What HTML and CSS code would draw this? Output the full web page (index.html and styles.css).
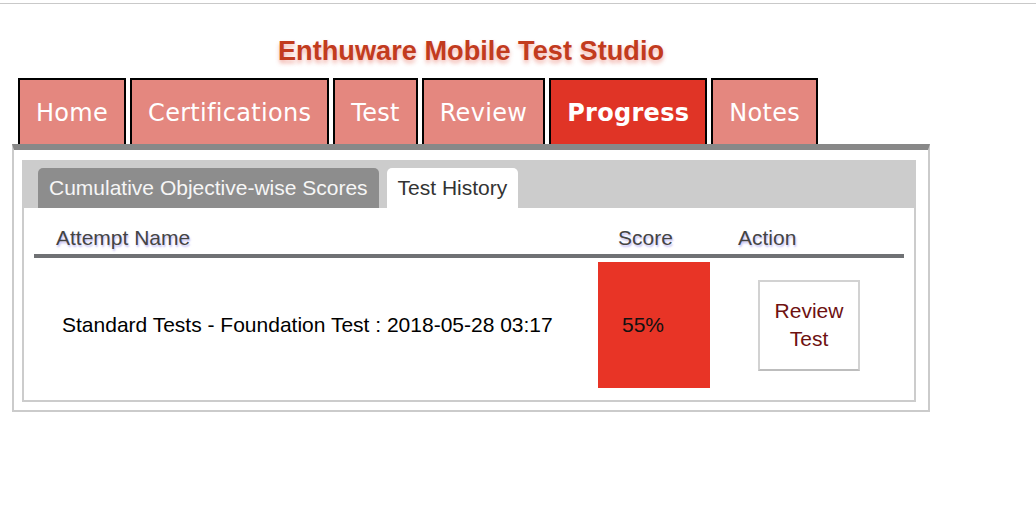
FILE: index.html
```html
<!DOCTYPE html>
<html>
<head>
<meta charset="utf-8">
<title>Enthuware Mobile Test Studio</title>
<link rel="stylesheet" href="styles.css">
</head>
<body>
<div class="topline"></div>
<div class="app">
  <h1 class="title">Enthuware Mobile Test Studio</h1>
  <nav class="tabs">
    <a class="tab">Home</a>
    <a class="tab">Certifications</a>
    <a class="tab">Test</a>
    <a class="tab">Review</a>
    <a class="tab active">Progress</a>
    <a class="tab">Notes</a>
  </nav>
  <section class="panel">
    <div class="inner">
      <div class="subtabs">
        <div class="subtab dark">Cumulative Objective-wise Scores</div>
        <div class="subtab current">Test History</div>
      </div>
      <div class="content">
        <div class="row head">
          <div class="hname">Attempt Name</div>
          <div class="hscore">Score</div>
          <div class="haction">Action</div>
        </div>
        <div class="row data">
          <div class="dname">Standard Tests - Foundation Test : 2018-05-28 03:17</div>
          <div class="dscore">55%</div>
          <div class="daction"><div class="btn">Review Test</div></div>
        </div>
      </div>
    </div>
  </section>
</div>
</body>
</html>
```

FILE: styles.css
```css
body {
  margin: 0;
  background: #fff;
  font-family: "Liberation Sans", Arial, sans-serif;
}

.topline {
  margin-top: 3px;
  border-top: 1px solid #c9c9c9;
}

.app {
  width: 918px;
  margin-left: 12px;
}

.title {
  margin: 31px 0 0;
  height: 31px;
  line-height: 31px;
  font-size: 27.2px;
  font-weight: bold;
  color: #c23b1e;
  text-align: center;
  text-shadow: 0 3px 4px rgba(225, 80, 60, 0.45);
}

.tabs {
  display: flex;
  gap: 4px;
  padding-left: 6px;
  margin-top: 12px;
}

.tab {
  height: 62px;
  line-height: 62px;
  padding: 2px 16px 0;
  border: 2px solid #000;
  border-bottom: 0;
  background: #e4877f;
  color: #fff;
  font-family: "DejaVu Sans", Verdana, sans-serif;
  font-size: 24px;
  letter-spacing: 0.3px;
}

.tab.active {
  background: #e03426;
  font-weight: bold;
}

.panel {
  box-sizing: border-box;
  width: 918px;
  border: 2px solid #cbcbcb;
  border-top: 6px solid #888;
  padding: 10px 12px 8px 8px;
}

.inner {
  border: 2px solid #ccc;
  background: #fff;
}

.subtabs {
  display: flex;
  gap: 8px;
  background: #ccc;
  padding: 6px 0 0 14px;
}

.subtab {
  height: 40px;
  line-height: 40px;
  padding: 0 11px;
  border-radius: 5px 5px 0 0;
  font-size: 21px;
}

.subtab.dark {
  background: #8d8d8d;
  color: #f6f6f6;
}

.subtab.current {
  background: #fff;
  color: #333;
}

.content {
  padding: 0 10px 12px;
}

.row {
  display: grid;
  grid-template-columns: 564px 112px 194px;
  font-size: 21px;
}

.head {
  padding: 18px 0 4px;
  line-height: 24px;
  border-bottom: 4px solid #6f7174;
  color: #444;
  text-shadow: 1px 2px 2px rgba(120, 110, 230, 0.45);
}

.hname { padding-left: 22px; }
.hscore { padding-left: 20px; }
.haction { padding-left: 28px; }

.data {
  padding-top: 4px;
  align-items: center;
  color: #000;
}

.dname {
  padding-left: 28px;
}

.dscore {
  height: 126px;
  display: flex;
  align-items: center;
  padding-left: 24px;
  background: #e83426;
  color: #111;
}

.daction {
  padding-left: 48px;
}

.btn {
  box-sizing: border-box;
  width: 102px;
  padding: 15px 0 16px;
  border: 2px solid #d2d2d2;
  border-bottom-color: #bdbdbd;
  text-align: center;
  line-height: 28px;
  color: #6e1111;
}
```
